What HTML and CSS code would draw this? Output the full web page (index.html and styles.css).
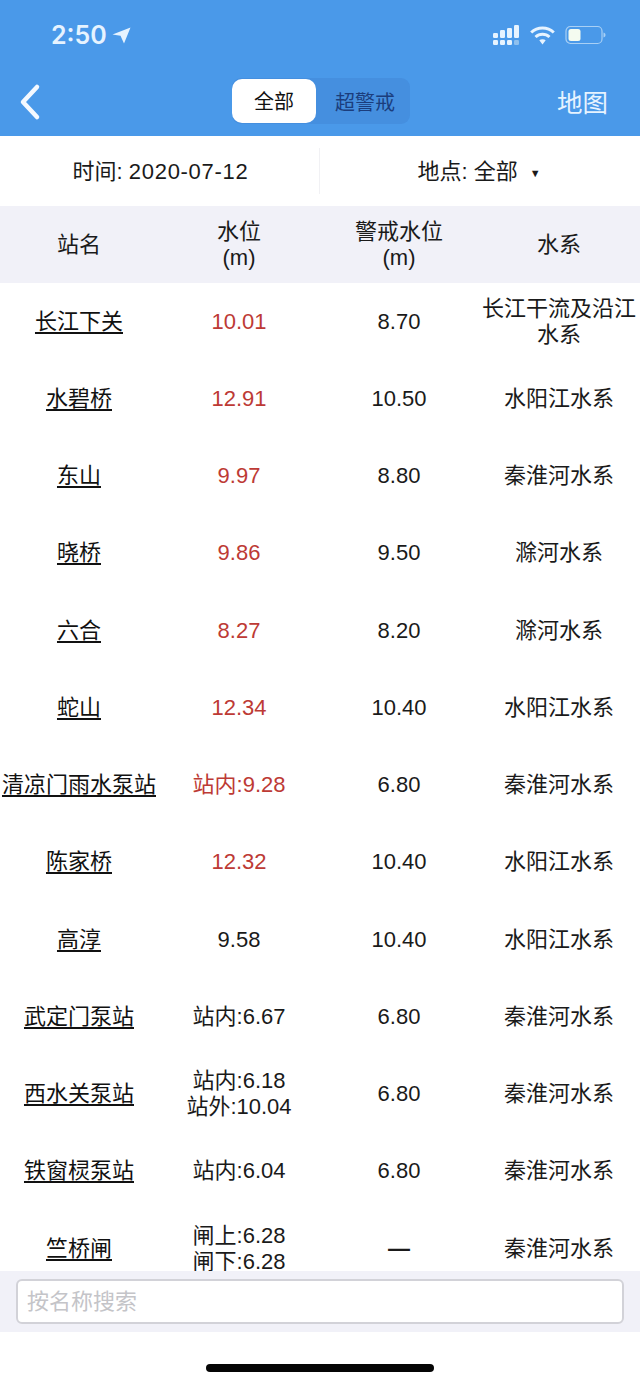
FILE: index.html
```html
<!DOCTYPE html>
<html lang="zh-CN">
<head>
<meta charset="utf-8">
<title>水位</title>
<link rel="stylesheet" href="styles.css">
</head>
<body>
<div class="app">
  <header class="top">
    <div class="status">
      <div class="clock"><span>2:50</span>
        <svg class="loc" width="19" height="17" viewBox="0 0 19 17"><path d="M18.500 0.500 L0.500 7.500 L8.500 8.800 L12 16.500 Z" fill="#e6f3ff"/></svg>
      </div>
      <div class="sys">
        <svg width="27" height="20" viewBox="0 0 27 20"><g fill="#e6f3ff"><rect x="0" y="8" width="5" height="5" rx="1.200"/><rect x="0" y="15" width="5" height="5" rx="1.200"/><rect x="7" y="5" width="5" height="8" rx="1.200"/><rect x="7" y="15" width="5" height="5" rx="1.200"/><rect x="14" y="3" width="5" height="10" rx="1.200"/><rect x="14" y="15" width="5" height="5" rx="1.200"/><rect x="21" y="0" width="5" height="13" rx="1.200"/></g><rect x="21" y="15" width="5" height="5" rx="1.200" fill="#8fc0ee"/></svg>
        <svg width="25" height="20" viewBox="0 0 25 20"><g fill="none" stroke="#e6f3ff" stroke-width="3"><path d="M1.200 7.500 C7.500 1.500 17.500 1.500 23.800 7.500"/><path d="M5.500 12 C9.500 8.300 15.500 8.300 19.500 12"/></g><path d="M9.300 15.300 C11 13.800 14 13.800 15.700 15.300 L12.500 19.500 Z" fill="#e6f3ff"/></svg>
        <svg width="41" height="20" viewBox="0 0 41 20"><rect x="1" y="1.500" width="36" height="17" rx="4.500" fill="none" stroke="#a9d0f5" stroke-width="1.200"/><rect x="3.500" y="4" width="12" height="12" rx="2.500" fill="#f4fbf0"/><path d="M38.500 7.500 C40 8 40.500 9 40.500 10 C40.500 11 40 12 38.500 12.500 Z" fill="#a9d0f5"/></svg>
      </div>
    </div>
    <nav class="bar">
      <svg class="back" width="24" height="38" viewBox="0 0 24 38"><path d="M19 4 L5 19 L19 34" fill="none" stroke="#f4f9ff" stroke-width="4.500" stroke-linecap="round" stroke-linejoin="round"/></svg>
      <div class="seg">
        <div class="seg-on">全部</div>
        <div class="seg-off">超警戒</div>
      </div>
      <div class="map">地图</div>
    </nav>
  </header>

  <section class="filters">
    <div class="filter filter-date">时间: <span class="date">2020-07-12</span></div>
    <div class="filter filter-place">地点: 全部<span class="caret">▼</span></div>
  </section>

  <div class="thead">
    <div>站名</div>
    <div>水位<br>(m)</div>
    <div>警戒水位<br>(m)</div>
    <div>水系</div>
  </div>

  <main class="tbody">
    <div class="row"><div><a class="name">长江下关</a></div><div class="hi">10.01</div><div>8.70</div><div>长江干流及沿江水系</div></div>
    <div class="row"><div><a class="name">水碧桥</a></div><div class="hi">12.91</div><div>10.50</div><div>水阳江水系</div></div>
    <div class="row"><div><a class="name">东山</a></div><div class="hi">9.97</div><div>8.80</div><div>秦淮河水系</div></div>
    <div class="row"><div><a class="name">晓桥</a></div><div class="hi">9.86</div><div>9.50</div><div>滁河水系</div></div>
    <div class="row"><div><a class="name">六合</a></div><div class="hi">8.27</div><div>8.20</div><div>滁河水系</div></div>
    <div class="row"><div><a class="name">蛇山</a></div><div class="hi">12.34</div><div>10.40</div><div>水阳江水系</div></div>
    <div class="row"><div><a class="name">清凉门雨水泵站</a></div><div class="hi">站内:9.28</div><div>6.80</div><div>秦淮河水系</div></div>
    <div class="row"><div><a class="name">陈家桥</a></div><div class="hi">12.32</div><div>10.40</div><div>水阳江水系</div></div>
    <div class="row"><div><a class="name">高淳</a></div><div>9.58</div><div>10.40</div><div>水阳江水系</div></div>
    <div class="row"><div><a class="name">武定门泵站</a></div><div>站内:6.67</div><div>6.80</div><div>秦淮河水系</div></div>
    <div class="row"><div><a class="name">西水关泵站</a></div><div>站内:6.18<br>站外:10.04</div><div>6.80</div><div>秦淮河水系</div></div>
    <div class="row"><div><a class="name">铁窗棂泵站</a></div><div>站内:6.04</div><div>6.80</div><div>秦淮河水系</div></div>
    <div class="row"><div><a class="name">竺桥闸</a></div><div>闸上:6.28<br>闸下:6.28</div><div class="dash">—</div><div>秦淮河水系</div></div>
  </main>

  <div class="search"><div class="search-box">按名称搜索</div></div>
  <div class="home"><div class="home-bar"></div></div>
</div>
</body>
</html>
```
FILE: styles.css
```css
* { box-sizing: border-box; }
html, body { margin: 0; padding: 0; background: #fff; }
body {
  font-family: "Liberation Sans", "Noto Sans CJK SC", sans-serif;
  font-size: 22px;
  line-height: 26px;
  color: #1a1a1a;
}
.app { width: 640px; height: 1385px; display: flex; flex-direction: column; overflow: hidden; }

.top { height: 136px; background: #4a99e9; flex: none; }
.status { height: 68px; display: flex; justify-content: space-between; align-items: flex-start; padding: 21px 34px 0 51px; }
.clock { display: flex; align-items: center; gap: 5px; color: #e6f3ff; font-family: "Inter", sans-serif; font-size: 25px; line-height: 28px; font-weight: 600; }
.sys { display: flex; align-items: center; gap: 10px; padding-top: 4px; }
.bar { height: 68px; position: relative; display: flex; align-items: flex-start; padding: 10px 0 0 232px; }
.back { position: absolute; left: 18px; top: 15px; }
.seg { display: flex; width: 178px; height: 46px; background: #458fdf; border-radius: 9px; }
.seg-on { width: 84px; height: 44px; margin-top: 1px; padding-top: 2px; background: #fff; border-radius: 10px; display: flex; align-items: center; justify-content: center; color: #111; font-size: 20px; }
.seg-off { flex: 1; display: flex; align-items: center; justify-content: center; color: #1b3d7c; font-size: 20px; padding: 3px 0 0 4px; }
.map { position: absolute; right: 32px; top: 19px; color: #e6f3ff; font-size: 25.500px; line-height: 32px; }

.filters { height: 70px; flex: none; display: flex; align-items: center; background: #fff; }
.filter { width: 320px; text-align: center; }
.filter-date { height: 46px; line-height: 48px; border-right: 1px solid #f1f1f4; padding-left: 2px; }
.filter-place { padding-top: 2px; padding-right: 2px; }
.date { letter-spacing: 0.7px; }
.caret { font-size: 11px; margin-left: 12px; vertical-align: 2px; }

.thead { height: 77px; flex: none; background: #f1f1f8; display: grid; grid-template-columns: repeat(4, 160px); align-items: center; text-align: center; }
.thead > div { padding-right: 2px; }
.tbody { height: 988px; flex: none; overflow: hidden; }
.row { height: 77.25px; display: grid; grid-template-columns: repeat(4, 160px); align-items: center; text-align: center; }
.row > div { padding-right: 2px; }
.name { color: #111; text-decoration: underline; text-underline-offset: 3px; }
.hi { color: #bd3a35; }
.dash { font-weight: 700; }

.search { height: 61px; flex: none; background: #f1f1f8; padding: 8px 16px; }
.search-box { height: 45px; background: #fff; border: 2px solid #d2d2d8; border-radius: 6px; padding: 7px 9px; color: #c4c4c8; line-height: 27px; }
.home { height: 53px; flex: none; display: flex; justify-content: center; padding-top: 32px; }
.home-bar { width: 228px; height: 8px; background: #050505; border-radius: 4px; }
```
